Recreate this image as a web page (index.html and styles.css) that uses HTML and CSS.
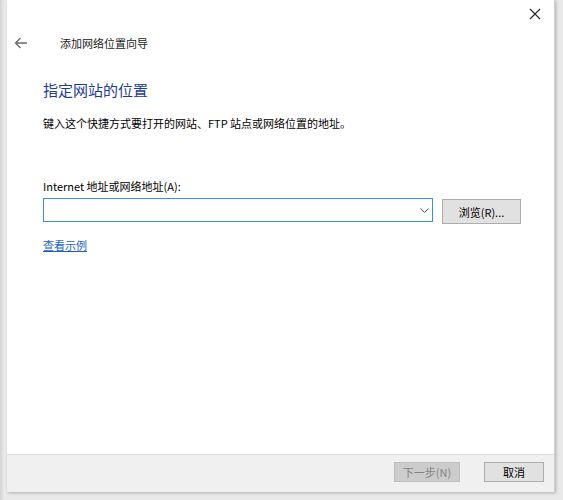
FILE: index.html
```html
<!DOCTYPE html>
<html lang="zh-CN">
<head>
<meta charset="UTF-8" />
<title>添加网络位置向导</title>
<link rel="stylesheet" href="styles.css">
</head>
<body>

<div class="desk">
  <div class="wizard">

    <!-- Title bar -->
    <div class="titlebar">
      <span class="close" title="关闭">
        <svg width="12" height="12" viewBox="0 0 12 12"><path d="M1 1L11 11M11 1L1 11" stroke="#222" stroke-width="1.1" fill="none"/></svg>
      </span>
    </div>

    <!-- Nav row -->
    <div class="nav">
      <span class="back">
        <svg width="14" height="12" viewBox="0 0 14 12"><path d="M13 6H1.5M6.5 1L1.5 6L6.5 11" stroke="#6b6b6b" stroke-width="1.3" fill="none"/></svg>
      </span>
      <span class="nav-title">添加网络位置向导</span>
    </div>

    <!-- Main -->
    <div class="content">
      <h1 class="main-title">指定网站的位置</h1>
      <p class="desc">键入这个快捷方式要打开的网站、FTP 站点或网络位置的地址。</p>

      <label class="label" for="addr">Internet 地址或网络地址(A):</label>
      <div class="addr-row">
        <div class="combo">
          <input type="text" id="addr" />
          <svg class="chev" width="9" height="5" viewBox="0 0 9 5"><path d="M0.5 0.5L4.5 4.5L8.5 0.5" stroke="#555" stroke-width="1" fill="none"/></svg>
        </div>
        <button class="btn browse">浏览(R)...</button>
      </div>

      <a class="link" href="#">查看示例</a>
    </div>

    <!-- Footer -->
    <div class="footer">
      <button class="btn next" disabled>下一步(N)</button>
      <button class="btn cancel">取消</button>
    </div>

  </div>
</div>

</body>
</html>
```

FILE: styles.css
```css
/* Base */
html, body {
  margin: 0;
  padding: 0;
  height: 100%;
  background: #e9e9e9;
  font-family: "Noto Sans CJK SC", "Noto Sans", sans-serif;
  font-size: 11px;
  color: #000;
  overflow: hidden;
}
.desk {
  width: 563px;
  height: 500px;
  background: linear-gradient(90deg, #d4d4d4 0, #ececec 5px, #e9e9e9 7px);
}

/* Window */
.wizard {
  margin-left: 7px;
  width: 548px;
  height: 492px;
  background: #fff;
  display: flex;
  flex-direction: column;
  box-shadow: 1px 1px 3px rgba(0,0,0,0.25);
  border-right: 1px solid #cfcfcf;
  box-sizing: border-box;
}
.titlebar {
  height: 30px;
  display: flex;
  justify-content: flex-end;
}
.close {
  width: 34px;
  height: 28px;
  display: flex;
  align-items: center;
  justify-content: center;
  margin-right: 2px;
}

.nav {
  height: 26px;
  display: flex;
  align-items: center;
}
.back {
  width: 14px;
  margin-left: 7px;
  display: flex;
}
.nav-title {
  margin-left: 32px;
  font-size: 11px;
  color: #1a1a1a;
}

/* Content */
.content {
  flex: 1;
  padding-left: 36px;
}
.main-title {
  margin: 23px 0 0;
  font-size: 15px;
  font-weight: normal;
  line-height: 22px;
  color: #1e3d94;
}
.desc {
  margin: 13px 0 0;
  line-height: 18px;
  font-size: 11px;
}
.label {
  display: block;
  margin-top: 45px;
  line-height: 18px;
  font-size: 11px;
}
.addr-row {
  display: flex;
  align-items: flex-start;
  margin-top: 3px;
}
.combo {
  position: relative;
  width: 390px;
}
.combo input {
  display: block;
  width: 100%;
  height: 24px;
  box-sizing: border-box;
  border: 1px solid #3c8ee0;
  outline: none;
  padding: 0 20px 0 4px;
  font-family: inherit;
  font-size: 11px;
}
.chev {
  position: absolute;
  right: 4px;
  top: 10px;
}

.btn {
  font-family: inherit;
  font-size: 11px;
  background: #e1e1e1;
  border: 1px solid #adadad;
  color: #000;
  padding: 0;
  box-sizing: border-box;
  cursor: pointer;
}
.browse {
  width: 79px;
  height: 25px;
  margin: 1px 0 0 9px;
}

.link {
  display: inline-block;
  margin-top: 12px;
  line-height: 18px;
  color: #1a62c4;
  text-decoration: underline;
  font-size: 11px;
}

/* Footer */
.footer {
  height: 38px;
  background: #f0f0f0;
  border-top: 1px solid #dfdfdf;
  box-sizing: border-box;
  display: flex;
  justify-content: flex-end;
  align-items: flex-start;
  padding: 7px 10px 0 0;
}
.next {
  width: 66px;
  height: 20px;
  background: #cccccc;
  border-color: #bfbfbf;
  color: #838383;
  cursor: default;
}
.cancel {
  width: 60px;
  height: 20px;
  margin-left: 24px;
}
```
